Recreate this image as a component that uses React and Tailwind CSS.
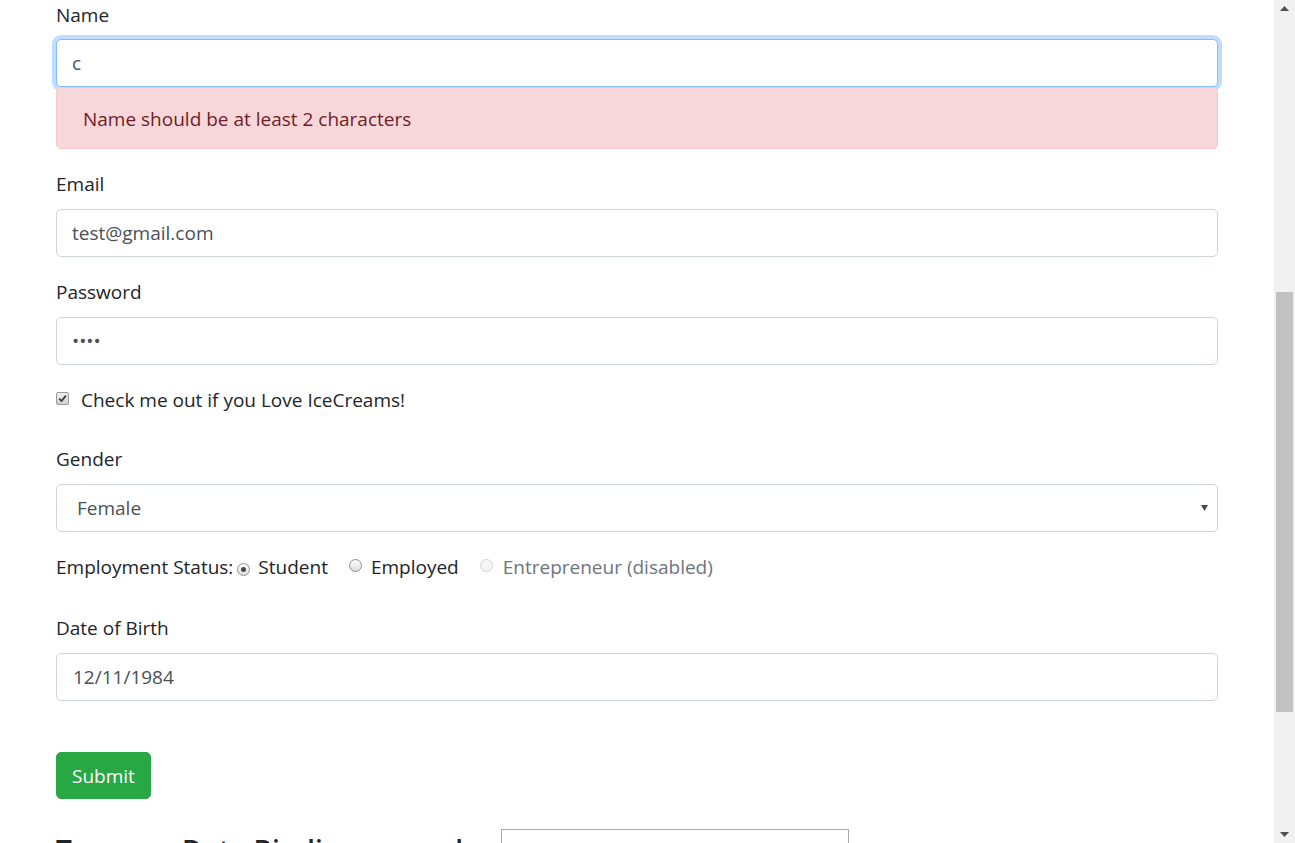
import React from 'react';

function Radio({ checked, disabled }) {
  return (
    <span
      className={`inline-flex w-[13px] h-[13px] rounded-full border items-center justify-center shrink-0 ${
        disabled ? 'border-[#d4d4d4] bg-[#f6f6f6]' : 'border-[#8f8f8f] bg-[linear-gradient(#fdfdfd,#dedede)]'
      }`}
    >
      {checked && <span className="w-[5px] h-[5px] rounded-full bg-[#4a4a4a]" />}
    </span>
  );
}

function Checkbox() {
  return (
    <span className="inline-flex w-[13px] h-[13px] rounded-[2px] border border-[#9a9a9a] bg-[linear-gradient(#f2f2f2,#cfcfcf)] items-center justify-center shrink-0">
      <svg width="9" height="9" viewBox="0 0 9 9">
        <path d="M1.2 4.6 L3.5 7 L7.9 1.6" fill="none" stroke="#3c3c3c" strokeWidth="1.8" />
      </svg>
    </span>
  );
}

function Field({ label, children, className = '' }) {
  return (
    <div className={`flex flex-col ${className}`}>
      <label className="h-[30px] leading-[30px] mb-[10px]">{label}</label>
      {children}
    </div>
  );
}

const inputCls =
  'w-full h-[48px] px-[15px] rounded-[5px] border border-[#ced4da] bg-white text-[#495057] outline-none';

export default function App() {
  return (
    <div className="flex w-[1295px] h-[843px] overflow-hidden bg-white text-[#212529] text-[19px] leading-[30px] font-['Open_Sans',sans-serif]">
      {/* page */}
      <div className="flex-1 h-full overflow-hidden px-[56px]">
        <form className="flex flex-col -mt-px">
          <div className="flex flex-col">
            <label className="h-[30px] leading-[30px] mb-[10px] pt-px">Name</label>
            <input
              readOnly
              value="c"
              className="w-full h-[48px] px-[15px] rounded-[5px] border border-[#80bdff] bg-white text-[#495057] outline-none shadow-[0_0_0_4px_rgba(0,123,255,0.25)]"
            />
            <div className="relative rounded-[5px] border border-[#f5c6cb] bg-[#f8d7da] text-[#721c24] px-[26px] py-[15px]">
              <span className="relative top-px">Name should be at least 2 characters</span>
            </div>
          </div>

          <Field label="Email" className="mt-[20px]">
            <input readOnly value="test@gmail.com" className={inputCls} />
          </Field>

          <Field label="Password" className="mt-[20px]">
            <input readOnly type="password" value="1234" className={inputCls} />
          </Field>

          <div className="mt-[20px] h-[30px] flex items-center">
            <span className="-mt-[9px]"><Checkbox /></span>
            <span className="ml-[12px]">Check me out if you Love IceCreams!</span>
          </div>

          <Field label="Gender" className="mt-[29px]">
            <div className="relative">
              <select
                value="Female"
                onChange={() => {}}
                className={`${inputCls} appearance-none pl-[20px]`}
              >
                <option>Male</option>
                <option>Female</option>
              </select>
              <svg className="absolute right-[10px] top-[21px]" width="7" height="6" viewBox="0 0 7 6">
                <path d="M0 0 H7 L3.5 6 Z" fill="#4a4a4a" />
              </svg>
            </div>
          </Field>

          <div className="mt-[20px] h-[30px] flex items-center">
            <span>Employment Status:</span>
            <span className="ml-[4px] -mt-[5px]"><Radio checked /></span>
            <span className="ml-[8px]">Student</span>
            <span className="ml-[21px] -mt-[5px]"><Radio /></span>
            <span className="ml-[9px]">Employed</span>
            <span className="ml-[21px] -mt-[5px]"><Radio disabled /></span>
            <span className="ml-[10px] text-[#6c757d]">Entrepreneur (disabled)</span>
          </div>

          <Field label="Date of Birth" className="mt-[31px]">
            <input readOnly value="12/11/1984" className={`${inputCls} pl-[16px]`} />
          </Field>

          <div className="mt-[51px]">
            <button
              type="button"
              className="h-[47px] px-[15px] rounded-[5px] bg-[#28a745] border border-[#28a745] text-white leading-[30px]"
            >
              Submit
            </button>
          </div>

          <div className="mt-[30px] flex items-start gap-[22px]">
            <h4 className="mt-[4px] text-[28px] leading-[34px] font-semibold">Two-way Data Binding example</h4>
            <input readOnly className="w-[348px] h-[30px] border border-[#a9a9a9] bg-white" />
          </div>
        </form>
      </div>

      {/* scrollbar */}
      <div className="w-[21px] h-full bg-[#f1f1f1] flex flex-col items-center">
        <div className="h-[17px] w-full flex items-center justify-center">
          <svg width="9" height="5" viewBox="0 0 9 5">
            <path d="M0 5 L4.5 0 L9 5 Z" fill="#505050" />
          </svg>
        </div>
        <div className="mt-[275px] w-[17px] h-[420px] bg-[#c1c1c1]" />
        <div className="flex-1" />
        <div className="h-[17px] w-full flex items-center justify-center">
          <svg width="9" height="5" viewBox="0 0 9 5">
            <path d="M0 0 L9 0 L4.5 5 Z" fill="#505050" />
          </svg>
        </div>
      </div>
    </div>
  );
}
